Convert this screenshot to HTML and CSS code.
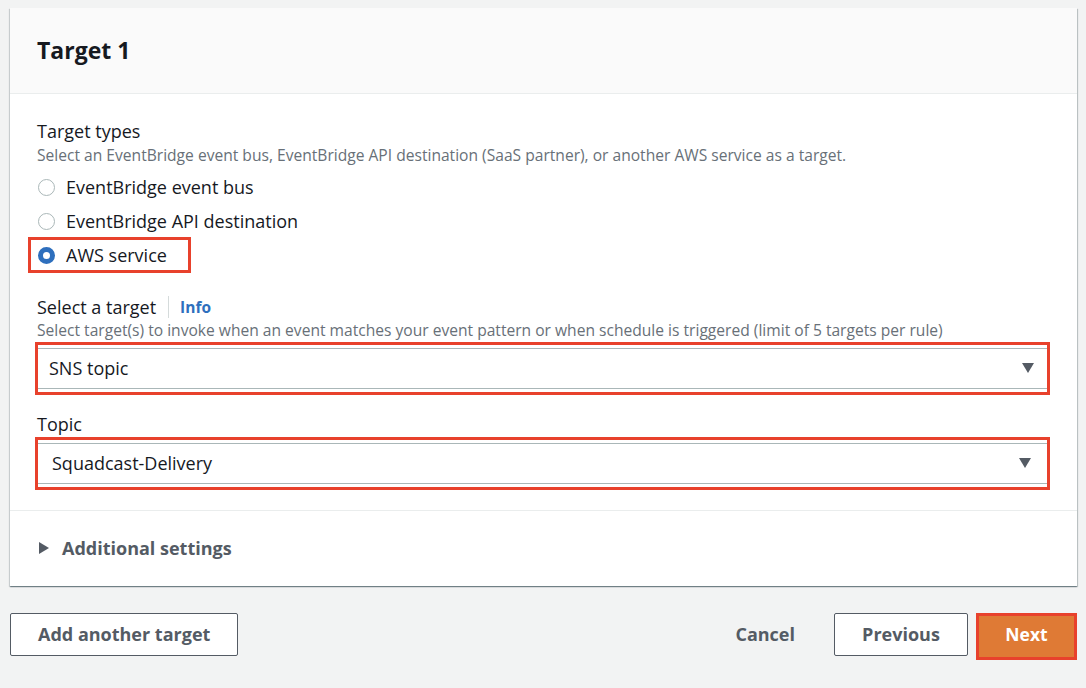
FILE: index.html
```html
<!DOCTYPE html>
<html>
<head>
<meta charset="utf-8">
<link rel="stylesheet" href="styles.css">
</head>
<body>
<div class="page">
  <div class="card">
    <div class="card-header"><h2>Target 1</h2></div>
    <div class="card-body">
      <div class="field">
        <div class="label">Target types</div>
        <div class="desc">Select an EventBridge event bus, EventBridge API destination (SaaS partner), or another AWS service as a target.</div>
        <div class="radios">
          <div class="radio-row"><span class="radio"></span><span class="radio-text">EventBridge event bus</span></div>
          <div class="radio-row"><span class="radio"></span><span class="radio-text">EventBridge API destination</span></div>
          <div class="radio-row hl-radio"><span class="radio checked"></span><span class="radio-text">AWS service</span></div>
        </div>
      </div>
      <div class="field field-target">
        <div class="label"><span class="label-main">Select a target</span><span class="info">Info</span></div>
        <div class="desc">Select target(s) to invoke when an event matches your event pattern or when schedule is triggered (limit of 5 targets per rule)</div>
        <div class="hl-box">
          <div class="select"><span class="select-text">SNS topic</span><span class="caret"></span></div>
        </div>
      </div>
      <div class="field field-topic">
        <div class="label">Topic</div>
        <div class="hl-box">
          <div class="select select-topic"><span class="select-text">Squadcast-Delivery</span><span class="caret"></span></div>
        </div>
      </div>
    </div>
    <div class="card-footer">
      <span class="expand-caret"></span><span class="expand-text">Additional settings</span>
    </div>
  </div>
  <div class="actions">
    <button class="btn">Add another target</button>
    <div class="actions-right">
      <button class="btn-link">Cancel</button>
      <button class="btn btn-prev">Previous</button>
      <div class="hl-next"><button class="btn-primary">Next</button></div>
    </div>
  </div>
</div>
</body>
</html>
```

FILE: styles.css
```css
* { box-sizing: border-box; }
html, body { margin: 0; padding: 0; }
body {
  background: #f2f3f3;
  font-family: "Open Sans", "Noto Sans", sans-serif;
  color: #16191f;
  width: 1086px;
  height: 688px;
  overflow: hidden;
}
.page { padding: 8px 9px 0 10px; }
.card {
  background: #fff;
  box-shadow: 0 1px 1px 0 rgba(0,28,36,.35), 1px 1px 1px 0 rgba(0,28,36,.18), -1px 1px 1px 0 rgba(0,28,36,.12);
}
.card-header {
  height: 86px;
  background: #fafafa;
  border-bottom: 1px solid #eaeded;
  display: flex;
  align-items: center;
  padding: 0 27px;
}
.card-header h2 {
  margin: 0;
  font-size: 23px;
  font-weight: 700;
  line-height: 30px;
  margin-top: -2px;
}
.card-body {
  padding: 26px 27px 20px;
  border-bottom: 1px solid #eaeded;
}
.label {
  font-size: 18px;
  line-height: 22px;
  display: flex;
  align-items: center;
}
.desc {
  font-size: 15.6px;
  line-height: 20px;
  color: #687078;
  margin-top: 3px;
}
.radios { margin-top: 5px; }
.radio-row {
  display: flex;
  align-items: center;
  height: 34px;
  font-size: 18px;
}
.radio {
  width: 17px;
  height: 17px;
  border-radius: 50%;
  border: 1.5px solid #aab7b8;
  margin-left: 1px;
  margin-right: 11px;
  flex: none;
}
.radio.checked {
  border: 5px solid #2e6fbd;
  background: #fff;
}
.hl-radio {
  width: 163px;
  height: 36px;
  border: 3px solid #e8412c;
  margin-left: -9px;
  margin-top: -1px;
  padding-left: 6px;
}
.field-target { margin-top: 23px; }
.label-main { padding-right: 12px; border-right: 1px solid #d5dbdb; line-height: 22px; }
.info {
  padding-left: 11px;
  font-size: 15.5px;
  font-weight: 700;
  color: #2e6fbd;
}
.field-target .desc { margin-top: 2px; }
.hl-box {
  margin-top: 2px;
  margin-left: -2px;
  border: 3px solid #e8412c;
  padding: 3px 0;
}
.select {
  height: 41px;
  border-top: 1px solid #aab7b8;
  border-bottom: 1px solid #aab7b8;
  display: flex;
  align-items: center;
  justify-content: space-between;
  padding: 0 13px 1px 11px;
  font-size: 18px;
}
.select-topic { padding-left: 14px; padding-right: 16px; }
.caret {
  width: 0; height: 0;
  border-left: 6.5px solid transparent;
  border-right: 6.5px solid transparent;
  border-top: 10px solid #545b64;
}
.field-topic { margin-top: 18px; }
.card-footer {
  height: 75px;
  display: flex;
  align-items: center;
  padding-left: 29px;
  padding-bottom: 1px;
}
.expand-caret {
  width: 0; height: 0;
  border-top: 6px solid transparent;
  border-bottom: 6px solid transparent;
  border-left: 10px solid #545b64;
  margin-right: 13px;
}
.expand-text {
  font-size: 18px;
  font-weight: 700;
  color: #545b64;
}
.actions {
  margin-top: 27px;
  display: flex;
  justify-content: space-between;
  align-items: flex-start;
}
.actions-right { display: flex; align-items: flex-start; }
button { font-family: inherit; cursor: pointer; }
.btn {
  height: 43px;
  background: #fff;
  border: 1px solid #545b64;
  border-radius: 2px;
  padding: 0 27px 2px;
  font-size: 18px;
  font-weight: 700;
  color: #545b64;
}
.btn-link {
  height: 43px;
  background: none;
  border: none;
  font-size: 18px;
  font-weight: 700;
  color: #545b64;
  padding: 0 20px 2px;
  margin-right: 19px;
}
.btn-prev { width: 134px; padding: 0 0 2px; }
.hl-next {
  margin-left: 8px;
  border: 3px solid #e8412c;
  width: 101px;
  height: 47px;
}
.btn-primary {
  width: 100%;
  height: 100%;
  border: none;
  background: #df7a35;
  font-size: 17.5px;
  font-weight: 700;
  color: #fff;
  padding: 0 0 6px;
}
```
